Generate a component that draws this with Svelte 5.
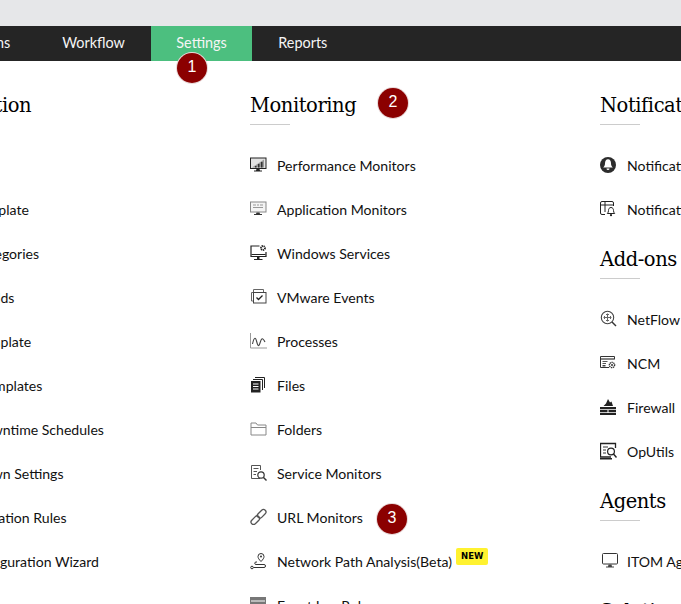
<script>
    const navItems = ['Plugins', 'Workflow', 'Settings', 'Reports']

    const columns = [
        [
            {
                title: 'Configuration',
                rows: [
                    { label: 'Discovery' },
                    { label: 'Device Template' },
                    { label: 'Device Categories' },
                    { label: 'Custom Fields' },
                    { label: 'Service Template' },
                    { label: 'Monitor Templates' },
                    { label: 'Device Downtime Schedules' },
                    { label: 'Device Down Settings' },
                    { label: 'Alarm Escalation Rules' },
                    { label: 'Quick Configuration Wizard' }
                ]
            }
        ],
        [
            {
                title: 'Monitoring',
                rows: [
                    { label: 'Performance Monitors', icon: 'perf' },
                    { label: 'Application Monitors', icon: 'app' },
                    { label: 'Windows Services', icon: 'win' },
                    { label: 'VMware Events', icon: 'vmware' },
                    { label: 'Processes', icon: 'proc' },
                    { label: 'Files', icon: 'files' },
                    { label: 'Folders', icon: 'folder' },
                    { label: 'Service Monitors', icon: 'service' },
                    { label: 'URL Monitors', icon: 'link' },
                    { label: 'Network Path Analysis(Beta)', icon: 'path', isNew: true },
                    { label: 'Event Log Rules', icon: 'log' }
                ]
            }
        ],
        [
            {
                title: 'Notifications',
                rows: [
                    { label: 'Notification Profiles', icon: 'bell' },
                    { label: 'Notification Schedules', icon: 'bellcal' }
                ]
            },
            {
                title: 'Add-ons',
                rows: [
                    { label: 'NetFlow', icon: 'netflow' },
                    { label: 'NCM', icon: 'ncm' },
                    { label: 'Firewall', icon: 'firewall' },
                    { label: 'OpUtils', icon: 'oputils' }
                ]
            },
            {
                title: 'Agents',
                rows: [{ label: 'ITOM Agent', icon: 'itom' }]
            },
            { title: 'Solutions', rows: [] }
        ]
    ]
</script>

{#snippet icon(name)}
    <svg class="icon" viewBox="0 0 18 18" width="18" height="18" aria-hidden="true">
        {#if name === 'perf'}
            <rect x="0.5" y="2" width="15.500" height="10.500" fill="#e2e2e2" stroke="#222" />
            <path d="M2 11.500l12-8v8z" fill="#999" />
            <path d="M5 11.500V10h1.500v1.500zM8 11.500V8h1.500v3.500zM11 11.500V6h1.500v5.500z" fill="#333" />
            <path d="M6.500 13h3l.5 1.500h2v1H4v-1h2z" fill="#222" />
        {:else if name === 'app'}
            <rect x="0.5" y="2" width="15.500" height="10" fill="#f4f4f4" stroke="#888" />
            <path d="M3 5h3M7 5h2M10 5h3M3 7.500h10" stroke="#999" fill="none" />
            <path d="M6.500 12.500h3l.5 1.500h2v1H4v-1h2z" fill="#333" />
        {:else if name === 'win'}
            <path d="M9.500 2H1v10.500h15V8" fill="none" stroke="#222" stroke-width="1.200" />
            <path d="M1.500 10.500h14" stroke="#222" />
            <path d="M7 12.500h2.500v2.500h3v1H4v-1h3z" fill="#222" />
            <circle cx="13" cy="4" r="2" fill="none" stroke="#222" stroke-width="1.800" stroke-dasharray="1.200 .6" />
        {:else if name === 'vmware'}
            <path d="M3.500 13H1.500V4.500h2M3.500 4.500V1.500h10v3" fill="none" stroke="#666" />
            <rect x="3.500" y="4.500" width="12.500" height="10.500" fill="#fff" stroke="#444" />
            <path d="M6.500 9.500l2 2 4-4" fill="none" stroke="#222" stroke-width="1.300" />
        {:else if name === 'proc'}
            <path d="M.5 1v15H17" fill="none" stroke="#999" />
            <path d="M2.500 12c1.500-7 3-7 4-3s2 7 3.500 2 2.500-6 5-1" fill="none" stroke="#444" stroke-width="1.100" />
        {:else if name === 'files'}
            <path d="M1 5h9.500v11.500H1z" fill="#222" />
            <path d="M3 8h5.500M3 10.500h5.500M3 13h5.500" stroke="#fff" />
            <path d="M3 3.500h9.500V14M5 1.500h9.500V12" fill="none" stroke="#222" />
        {:else if name === 'folder'}
            <path d="M1 15V3h5l1.500 2H16v10H1zM1 7.500h15" fill="none" stroke="#888" />
        {:else if name === 'service'}
            <path d="M10 14.500H1.500v-13h9V6" fill="none" stroke="#555" />
            <path d="M3.500 4.500h5M3.500 7.500H7M3.500 10.500H6" stroke="#555" />
            <circle cx="11" cy="11" r="3.200" fill="#fff" stroke="#333" stroke-width="1.200" />
            <path d="M13.500 13.500l3 3" stroke="#333" stroke-width="1.400" />
        {:else if name === 'link'}
            <g fill="none" stroke="#555" stroke-width="1.300" transform="rotate(-45 8.500 9)">
                <rect x="-1" y="6.500" width="10" height="5" rx="2.500" />
                <rect x="8" y="6.500" width="10" height="5" rx="2.500" />
            </g>
        {:else if name === 'path'}
            <path d="M11 9.500C9 7.500 8 6 8 4.500a3 3 0 0 1 6 0c0 1.500-1 3-3 5z" fill="none" stroke="#333" />
            <circle cx="11" cy="4.500" r="1" fill="#333" />
            <circle cx="2" cy="15.500" r="1.300" fill="none" stroke="#333" />
            <path d="M3.500 15.500h10.500a1.500 1.500 0 0 0 0-3H6a1.200 1.200 0 0 1 0-2.500h1" fill="none" stroke="#333" />
        {:else if name === 'log'}
            <rect x="0" y="1" width="16" height="14" fill="#777" />
            <path d="M1 5h14" stroke="#fff" />
        {:else if name === 'bell'}
            <circle cx="8" cy="9" r="8" fill="#2c2c2c" />
            <path d="M8 3.200c2 0 3 1.800 3 4 0 2 .7 3.300 1.800 4.300H3.200C4.300 10.500 5 9.200 5 7.200c0-2.200 1-4 3-4z" fill="#fff" />
            <path d="M6.500 12.500h3a1.500 1.500 0 0 1-3 0z" fill="#fff" />
        {:else if name === 'bellcal'}
            <path d="M5 14.500H2a1.500 1.500 0 0 1-1.500-1.500V3A1.500 1.500 0 0 1 2 1.500h10A1.500 1.500 0 0 1 13.500 3v3M.5 5h13M5 1.500V12" fill="none" stroke="#222" />
            <path d="M11 7.500c1.700 0 2.500 1.300 2.500 3 0 1.400.4 2.200 1.200 3H7.300c.8-.8 1.200-1.600 1.200-3 0-1.700.8-3 2.500-3z" fill="#fff" stroke="#222" />
            <circle cx="11" cy="15.200" r="1.100" fill="#222" />
        {:else if name === 'netflow'}
            <circle cx="7.500" cy="7.500" r="6.200" fill="none" stroke="#444" stroke-width="1.100" />
            <path d="M7.500 3.500v8M3.500 7.500h8M6 4.500h3M6 10.500h3M4.500 6v3M10.500 6v3" stroke="#666" fill="none" />
            <path d="M12 12l4 4" stroke="#333" stroke-width="1.400" />
        {:else if name === 'ncm'}
            <path d="M9 13.500H.5v-11h14v3" fill="none" stroke="#333" />
            <path d="M1 5h13" stroke="#333" stroke-width="1.200" />
            <path d="M2.500 7.500h5M2.500 9.500H6" stroke="#555" />
            <rect x="2.500" y="11" width="3" height="1.500" fill="#444" />
            <circle cx="12" cy="11" r="2.600" fill="#fff" stroke="#333" stroke-width="1.400" stroke-dasharray="1.300 .6" />
            <circle cx="12" cy="11" r="1" fill="#333" />
        {:else if name === 'firewall'}
            <path d="M8 1l2 3.500 1.500-1L13 8H3.500L6 5.500z" fill="#222" />
            <path d="M0 9h16v2.300H0zM0 12h7.500v2.300H0zM8.500 12H16v2.300H8.500zM0 15h16v2H0z" fill="#222" />
        {:else if name === 'oputils'}
            <path d="M11 15H.5V1.500h15V6" fill="none" stroke="#222" stroke-width="1.300" />
            <path d="M3 5h5M3 8h3M3 11h3" stroke="#333" />
            <circle cx="11" cy="9.500" r="3.400" fill="#fff" stroke="#222" stroke-width="1.200" />
            <path d="M13.500 12l3 3.500" stroke="#222" stroke-width="1.400" />
            <path d="M0 16h12v1.500H0z" fill="#222" />
        {:else if name === 'itom'}
            <rect x="2.500" y="1.500" width="15" height="10.500" rx="1" fill="#fff" stroke="#333" />
            <path d="M8.500 12.500h3l.5 2h2v1H6v-1h2z" fill="#444" />
        {/if}
    </svg>
{/snippet}

<div class="page">
    <div class="top-band"></div>

    <nav>
        {#each navItems as item}
            <span class="nav-item" class:active={item === 'Settings'}>{item}</span>
        {/each}
    </nav>

    <div class="columns">
        {#each columns as sections}
            <div class="column">
                {#each sections as section}
                    <h2>{section.title}</h2>
                    <ul>
                        {#each section.rows as row}
                            <li>
                                {#if row.icon}
                                    {@render icon(row.icon)}
                                {/if}
                                <span class="label">{row.label}</span>
                                {#if row.isNew}
                                    <span class="new">NEW</span>
                                {/if}
                            </li>
                        {/each}
                    </ul>
                {/each}
            </div>
        {/each}
    </div>

    <span class="marker one">1</span>
    <span class="marker two">2</span>
    <span class="marker three">3</span>
</div>

<style>
    :global(body) {
        background: #fff;
        overflow: hidden;
    }

    .page {
        position: relative;
        width: 681px;
        height: 604px;
        overflow: hidden;
        font-family: Lato, "Liberation Sans", sans-serif;
        font-size: 14.080px;
        color: #111;
    }

    .top-band {
        height: 26px;
        background: #e6e7e9;
    }

    nav {
        display: flex;
        height: 35px;
        background: #252525;
    }

    .nav-item {
        display: flex;
        align-items: center;
        box-sizing: border-box;
        padding: 0 26px 2px;
        color: #f5f5f5;
        font-size: 14.400px;
        white-space: nowrap;
    }

    .nav-item:first-child {
        margin-left: -61px;
    }

    .nav-item.active {
        background: #4cbf7f;
        padding: 0 25.500px 2px;
    }

    .columns {
        display: flex;
        margin-left: -100px;
        padding-top: 17px;
    }

    .column {
        flex: 0 0 350px;
    }

    h2 {
        position: relative;
        height: 46px;
        margin: 0 0 20px;
        padding-top: 12px;
        box-sizing: border-box;
        font-family: "DejaVu Serif", serif;
        font-size: 19.500px;
        font-weight: 400;
        letter-spacing: -0.450px;
        line-height: 32px;
        color: #000;
        white-space: nowrap;
    }

    h2::after {
        content: '';
        position: absolute;
        left: 0;
        bottom: -1px;
        width: 40px;
        height: 1px;
        background: #ccc;
    }

    ul {
        margin: 0;
        padding: 0;
        list-style: none;
    }

    li {
        display: flex;
        align-items: center;
        height: 44px;
        box-sizing: border-box;
        padding-bottom: 2px;
        white-space: nowrap;
    }

    li:not(:has(.icon)) .label {
        margin-left: 27px;
    }

    .icon {
        flex: none;
        margin-right: 9px;
    }

    .new {
        align-self: flex-start;
        margin: 8px 0 0 4px;
        padding: 0 5px;
        height: 17px;
        line-height: 17px;
        background: #fff230;
        border-radius: 2px;
        font-family: "DejaVu Sans", sans-serif;
        font-size: 8.500px;
        font-weight: 700;
        color: #000;
    }

    .marker {
        position: absolute;
        width: 30px;
        height: 30px;
        border-radius: 50%;
        background: #8b0000;
        box-shadow: 0 0 0 1px #e9d9d9;
        color: #fff;
        font-family: "Liberation Sans", Arial, sans-serif;
        font-size: 16px;
        line-height: 28px;
        text-align: center;
    }

    .one {
        left: 177px;
        top: 53px;
    }

    .two {
        left: 378px;
        top: 88px;
    }

    .three {
        left: 377px;
        top: 504px;
    }
</style>
